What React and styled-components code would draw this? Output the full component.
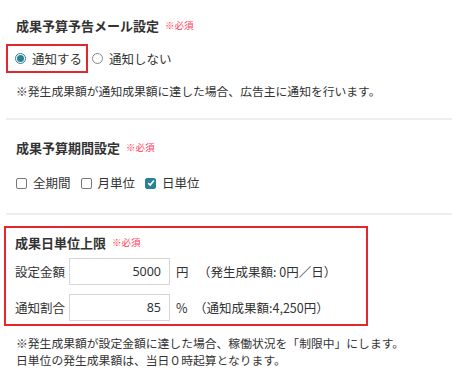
import styled, { createGlobalStyle } from "styled-components";

const GlobalStyle = createGlobalStyle`
  body {
    margin: 0;
    background: #fff;
    color: #333;
    font-family: "Noto Sans CJK JP", "Noto Sans", sans-serif;
  }
`;

const Page = styled.div`
  width: 452px;
  padding: 16px 0 0 6px;
  box-sizing: border-box;
`;

const Section = styled.section`
  padding: ${(p) => p.$pad || "0 0 0 10px"};
  border-bottom: ${(p) => (p.$line ? "2px solid #eeeeee" : "none")};
`;

const Title = styled.h3`
  margin: 0;
  font-size: 13px;
  font-weight: bold;
  line-height: 20px;
  color: #333;
  display: flex;
  align-items: flex-start;
  gap: 6px;
`;

const Required = styled.span`
  margin-top: 2px;
  font-size: 9.5px;
  font-weight: normal;
  color: #ff3a5a;
  line-height: 14px;
`;

const Options = styled.div`
  display: flex;
  align-items: center;
  margin: ${(p) => p.$margin || "0"};
  gap: ${(p) => p.$gap || "6px"};
`;

const Highlight = styled.div`
  border: 2px solid #e5262d;
  padding: 0 4px 0 7px;
  height: 25px;
  display: flex;
  align-items: center;
`;

const Choice = styled.label`
  display: flex;
  align-items: center;
  gap: 6px;
  font-size: 12.5px;
  line-height: 18px;
  color: #333;
`;

const RadioMark = styled.span`
  width: 11px;
  height: 11px;
  border-radius: 50%;
  border: 1px solid ${(p) => (p.$on ? "#2a7f94" : "#888")};
  box-sizing: border-box;
  display: inline-flex;
  align-items: center;
  justify-content: center;
  background: #fff;
  &::after {
    content: "";
    width: 7px;
    height: 7px;
    border-radius: 50%;
    background: ${(p) => (p.$on ? "#2a8197" : "transparent")};
  }
`;

const CheckMark = styled.span`
  width: 11px;
  height: 11px;
  border-radius: 2px;
  box-sizing: border-box;
  border: 1px solid ${(p) => (p.$on ? "#2a8197" : "#777")};
  background: ${(p) => (p.$on ? "#2a8197" : "#fff")};
  display: inline-flex;
  align-items: center;
  justify-content: center;
`;

const Note = styled.p`
  margin: ${(p) => p.$margin || "0"};
  font-size: 11.8px;
  line-height: 17px;
  color: #333;
`;

const LimitBox = styled.div`
  margin: 11px 0 0 -2px;
  width: 364px;
  height: 100px;
  box-sizing: border-box;
  border: 2px solid #e5262d;
  padding: 5px 0 0 9px;
`;

const FieldRow = styled.div`
  display: flex;
  align-items: center;
  height: 27px;
  margin-top: ${(p) => p.$top || "0"};
  font-size: 12.5px;
  color: #333;
`;

const FieldLabel = styled.span`
  width: 54px;
`;

const Amount = styled.input`
  width: 101px;
  height: 27px;
  box-sizing: border-box;
  border: 1px solid #d6d6d6;
  padding: 0 8px 0 0;
  text-align: right;
  font-family: "Noto Sans", sans-serif;
  font-size: 12.5px;
  color: #333;
  outline: none;
`;

const Unit = styled.span`
  margin-left: 6px;
  min-width: ${(p) => p.$w || "auto"};
`;

const Hint = styled.span`
  margin-left: ${(p) => p.$left || "0"};
`;

const Check = () => (
  <svg width="8" height="8" viewBox="0 0 8 8">
    <path d="M1.2 4.2 L3.2 6.1 L6.9 1.6" fill="none" stroke="#fff" strokeWidth="1.6" />
  </svg>
);

export default function App() {
  return (
    <>
      <GlobalStyle />
      <Page>
        <Section $line $pad="0 0 19px 10px">
          <Title>
            成果予算予告メール設定<Required>※必須</Required>
          </Title>
          <Options $margin="8px 0 0 -10px" $gap="4px">
            <Highlight>
              <Choice>
                <RadioMark $on />
                通知する
              </Choice>
            </Highlight>
            <Choice>
              <RadioMark />
              通知しない
            </Choice>
          </Options>
          <Note $margin="9px 0 0">
            ※発生成果額が通知成果額に達した場合、広告主に通知を行います。
          </Note>
        </Section>

        <Section $line $pad="18px 0 21px 10px">
          <Title>
            成果予算期間設定<Required>※必須</Required>
          </Title>
          <Options $margin="16px 0 0" $gap="10px">
            <Choice>
              <CheckMark />
              全期間
            </Choice>
            <Choice>
              <CheckMark />
              月単位
            </Choice>
            <Choice>
              <CheckMark $on>
                <Check />
              </CheckMark>
              日単位
            </Choice>
          </Options>
        </Section>

        <LimitBox>
          <Title>
            成果日単位上限<Required>※必須</Required>
          </Title>
          <FieldRow $top="5px">
            <FieldLabel>設定金額</FieldLabel>
            <Amount defaultValue="5000" />
            <Unit $w="16px">円</Unit>
            <Hint $left="6px">（発生成果額: 0円／日）</Hint>
          </FieldRow>
          <FieldRow $top="9px">
            <FieldLabel>通知割合</FieldLabel>
            <Amount defaultValue="85" />
            <Unit $w="16px">%</Unit>
            <Hint $left="2px">（通知成果額:4,250円）</Hint>
          </FieldRow>
        </LimitBox>

        <Section $pad="8px 0 0 10px">
          <Note>
            ※発生成果額が設定金額に達した場合、稼働状況を「制限中」にします。
            <br />
            日単位の発生成果額は、当日０時起算となります。
          </Note>
        </Section>
      </Page>
    </>
  );
}
